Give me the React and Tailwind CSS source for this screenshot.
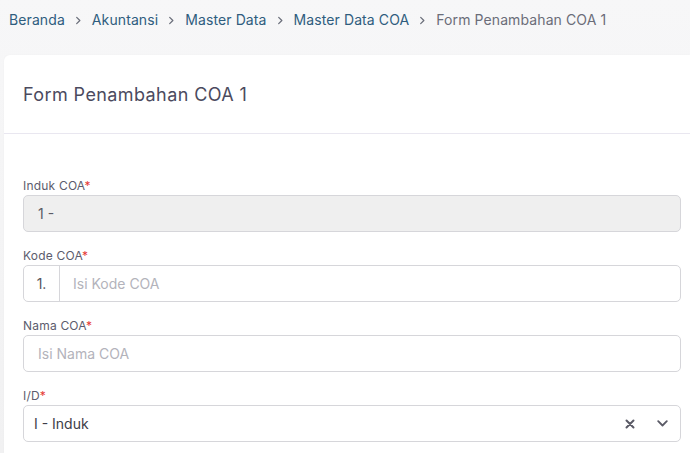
import React from 'react';

const crumbs = ['Beranda', 'Akuntansi', 'Master Data', 'Master Data COA'];

const Chevron = () => (
  <svg className="w-[7px] h-[9px] text-[#6b6f7b]" viewBox="0 0 7 10" fill="none" stroke="currentColor" strokeWidth="1.4" strokeLinecap="round" strokeLinejoin="round">
    <path d="M1.5 1.5l3.5 3.5-3.5 3.5" />
  </svg>
);

const Label = ({ children }) => (
  <label className="block text-[12px] leading-[14px] text-[#5c5c6d] mb-[2px] tracking-[0.2px]">
    {children}
    <span className="text-[#e53935]">*</span>
  </label>
);

const App = () => {
  return (
    <div
      className="w-[690px] h-[453px] overflow-hidden bg-gradient-to-b from-[#f7f7f8] to-[#f1f1f2] text-[#333]"
      style={{ fontFamily: 'Inter, "Open Sans", sans-serif' }}
    >
      {/* breadcrumb */}
      <nav className="h-[55px] flex items-start pt-[11px] pl-[9px] text-[14px] leading-[18px] tracking-[0.1px]">
        <div className="flex items-center gap-[10px]">
          {crumbs.map((c) => (
            <React.Fragment key={c}>
              <a className="text-[#2f5d7e]">{c}</a>
              <Chevron />
            </React.Fragment>
          ))}
          <span className="text-[#6b6d79]">Form Penambahan COA 1</span>
        </div>
      </nav>

      {/* card */}
      <div className="ml-[4px] bg-white rounded-tl-[6px] h-[398px] shadow-[0_0_2px_rgba(0,0,0,0.04)]">
        <div className="h-[79px] border-b border-[#e9e7f0] pl-[19px] pt-[28px]">
          <h1 className="text-[18px] leading-[24px] text-[#4b4a5e] tracking-[0.4px]">Form Penambahan COA 1</h1>
        </div>

        <div className="pl-[19px] pr-[9px] pt-[45px] flex flex-col gap-[17px]">
          <div>
            <Label>Induk COA</Label>
            <div className="h-[37px] rounded-[5px] border border-[#d6d6da] bg-[#efefef] flex items-center pl-[14px] text-[14px] text-[#5a5a64]">
              1 -
            </div>
          </div>

          <div>
            <Label>Kode COA</Label>
            <div className="h-[37px] rounded-[5px] border border-[#d6d6da] bg-white flex items-stretch text-[14px]">
              <div className="w-[36px] border-r border-[#d6d6da] flex items-center justify-center text-[#555560]">1.</div>
              <div className="flex items-center pl-[13px] text-[#b3b3bb]">Isi Kode COA</div>
            </div>
          </div>

          <div>
            <Label>Nama COA</Label>
            <div className="h-[37px] rounded-[5px] border border-[#d6d6da] bg-white flex items-center pl-[14px] text-[14px] text-[#b3b3bb]">
              Isi Nama COA
            </div>
          </div>

          <div>
            <Label>I/D</Label>
            <div className="h-[37px] rounded-[5px] border border-[#d6d6da] bg-white flex items-center pl-[10px] pr-[12px] text-[14px] text-[#3d3d48]">
              <span className="flex-1">I - Induk</span>
              <svg className="w-[10px] h-[10px] text-[#5a5a66] mr-[22px]" viewBox="0 0 10 10" fill="none" stroke="currentColor" strokeWidth="2" strokeLinecap="round">
                <path d="M1.5 1.5l7 7M8.5 1.5l-7 7" />
              </svg>
              <svg className="w-[11px] h-[7px] text-[#5a5a66]" viewBox="0 0 11 7" fill="none" stroke="currentColor" strokeWidth="1.8" strokeLinecap="round" strokeLinejoin="round">
                <path d="M1.2 1.2l4.3 4.3 4.3-4.3" />
              </svg>
            </div>
          </div>
        </div>
      </div>
    </div>
  );
};

export default App;
